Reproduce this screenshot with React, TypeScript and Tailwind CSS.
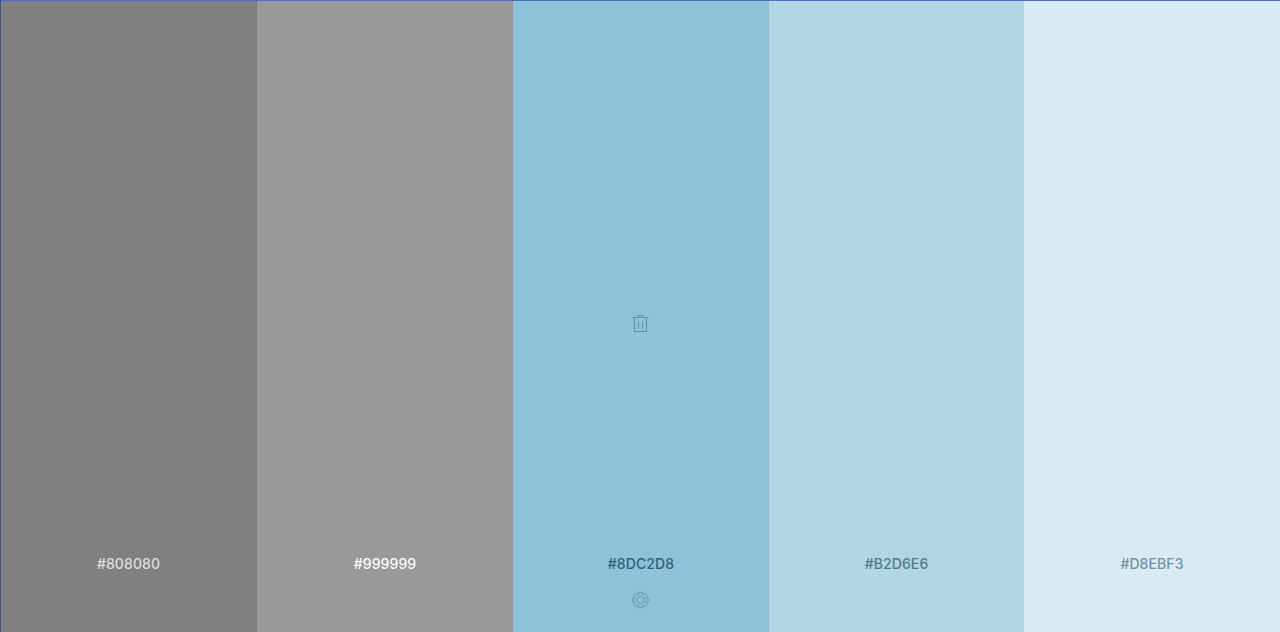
function gearPath(cx: number, cy: number, outer: number, inner: number, teeth: number) {
  const pts: string[] = [];
  const step = (Math.PI * 2) / teeth;
  for (let i = 0; i < teeth; i++) {
    const a = i * step - Math.PI / 2;
    const offs: [number, number][] = [
      [-0.5, inner],
      [-0.24, outer],
      [0.24, outer],
      [0.5, inner],
    ];
    for (const [o, r] of offs) {
      const t = a + o * step;
      pts.push(`${(cx + r * Math.cos(t)).toFixed(2)} ${(cy + r * Math.sin(t)).toFixed(2)}`);
    }
  }
  return "M" + pts.join("L") + "Z";
}

export default function App() {
  const cols = [
    { hex: "#808080", bg: "bg-[#808080]", text: "text-white/75", w: "w-[257px]" },
    { hex: "#999999", bg: "bg-[#999999]", text: "text-white", w: "w-[256px]" },
    { hex: "#8DC2D8", bg: "bg-[#8dc2d8]", text: "text-[#2f6178]", w: "w-[256px]" },
    { hex: "#B2D6E6", bg: "bg-[#b2d6e6]", text: "text-[#4f7a8e]", w: "w-[255px]" },
    { hex: "#D8EBF3", bg: "bg-[#d8ebf3]", text: "text-[#75929f]", w: "w-[256px]" },
  ];
  return (
    <div className="flex h-[632px] w-[1280px] overflow-hidden border-t border-l border-t-[#4a6fb8] border-l-[#46557f] font-['Inter',sans-serif]">
      {cols.map((c, i) => (
        <div key={c.hex} className={`relative flex flex-col items-center ${c.w} ${i === 0 ? "-ml-px" : ""} ${c.bg}`}>
          {i === 2 && (
            <svg className="absolute left-[119px] top-[313px] h-[19px] w-[18px]" viewBox="0 0 18 19" fill="none" stroke="#5f93ab" strokeWidth="1">
              <path d="M.5 3.500h16M2.500 3.500v14h12v-14M6 3.500v-2h5v2M6.500 8v6.500M10.500 8v6.500" />
            </svg>
          )}
          <div className={`mt-[554px] text-[14px] leading-[18px] font-medium tracking-[0.1px] ${c.text}`}>{c.hex}</div>
          {i === 2 && (
            <svg className="mt-[18px] h-[18px] w-[18px]" viewBox="0 0 18 18" fill="none" stroke="#5f93ab" strokeWidth="0.9">
              <path d={gearPath(8.5, 9, 8, 5.8, 8)} strokeLinejoin="round" />
              <circle cx="8.500" cy="9" r="3.500" />
            </svg>
          )}
        </div>
      ))}
    </div>
  );
}
